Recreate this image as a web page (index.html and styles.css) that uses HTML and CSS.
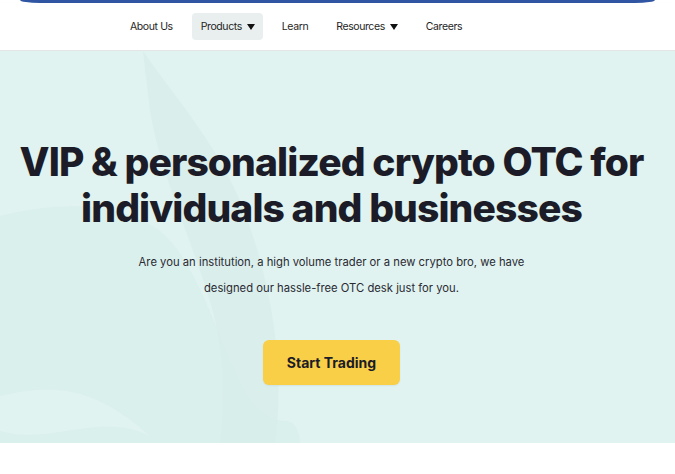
FILE: index.html
```html
<!DOCTYPE html>
<html lang="en">
<head>
<meta charset="utf-8">
<title>OTC</title>
<link rel="stylesheet" href="styles.css">
</head>
<body>
<div class="topbar"></div>
<header class="nav">
  <nav class="menu">
    <a class="item">About Us</a>
    <a class="item active">Products <span class="caret"></span></a>
    <a class="item">Learn</a>
    <a class="item">Resources <span class="caret"></span></a>
    <a class="item">Careers</a>
  </nav>
</header>
<section class="hero">
  <svg class="waves" width="675" height="393" viewBox="0 0 675 393" aria-hidden="true">
    <path d="M143 0 C170 40 215 90 240 150 C262 205 275 260 278 320 C280 360 275 393 275 393 L220 393 C225 350 225 300 210 250 C190 185 160 120 150 60 C148 40 145 20 143 0 Z" fill="#d4ece8" opacity="0.5"/>
    <path d="M0 165 C60 150 120 150 160 180 C190 205 210 260 230 310 C245 345 260 370 285 370 C300 370 300 393 300 393 L0 393 L0 380 C50 395 100 360 150 385 C100 340 60 330 0 345 Z" fill="#d6ede9" opacity="0.55"/>
  </svg>
  <div class="content">
    <h1 class="title">VIP &amp; personalized crypto OTC for individuals and businesses</h1>
    <p class="lead">Are you an institution, a high volume trader or a new crypto bro, we have designed our hassle-free OTC desk just for you.</p>
    <a class="cta">Start Trading</a>
  </div>
</section>
</body>
</html>
```
FILE: styles.css
```css
* { box-sizing: border-box; }
html, body { margin: 0; padding: 0; background: #fff; }
body { font-family: "Inter", "Lato", sans-serif; color: #1c1c28; width: 675px; height: 474px; overflow: hidden; }

.topbar {
  height: 3px;
  margin: 0 20px;
  background: #3056a3;
  border-radius: 0 0 20px 20px / 0 0 3px 3px;
}

.nav {
  height: 48px;
  background: #fff;
  border-bottom: 1px solid #e4e6e6;
  box-shadow: 0 1px 2px rgba(0,0,0,0.06);
  display: flex;
  align-items: center;
  padding-left: 121px;
}
.menu { display: flex; align-items: center; gap: 10px; }
.item {
  font-size: 10.5px;
  color: #1e1e24;
  padding: 7px 9px;
  border-radius: 4px;
  display: flex;
  align-items: center;
  gap: 3px;
  letter-spacing: -0.4px;
}
.item.active { background: #e9efee; height: 27px; padding: 7px 8px 7px 9px; }
.caret {
  width: 0; height: 0;
  border-left: 4.5px solid transparent;
  border-right: 4.5px solid transparent;
  border-top: 6px solid #111;
  margin-left: 2px;
}

.hero {
  position: relative;
  height: 392px;
  background: #e0f3f0;
  overflow: hidden;
}
.waves { position: absolute; left: 0; top: 0; }
.content {
  position: relative;
  display: flex;
  flex-direction: column;
  align-items: center;
  padding-top: 88px;
  padding-right: 12px;
}
.title {
  margin: 0;
  width: 650px;
  text-align: center;
  font-size: 39px;
  line-height: 46px;
  font-weight: 800;
  letter-spacing: -0.9px;
  color: #1c1c28;
}
.lead {
  margin: 18px 0 0;
  width: 400px;
  text-align: center;
  font-size: 11.25px;
  line-height: 26px;
  color: #2a2a33;
}
.cta {
  margin-top: 39px;
  width: 137px;
  height: 45px;
  background: #f8cf46;
  border-radius: 6px;
  display: flex;
  align-items: center;
  justify-content: center;
  font-size: 14px;
  font-weight: 700;
  color: #1c1c28;
  box-shadow: 0 1px 2px rgba(0,0,0,0.06);
}
```
